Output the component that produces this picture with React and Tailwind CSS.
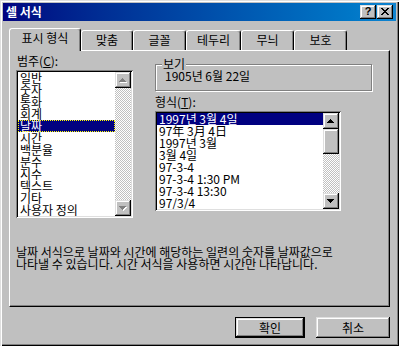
import React from "react";

const raised =
  "shadow-[inset_-1px_-1px_#000,inset_1px_1px_#dfdfdf,inset_-2px_-2px_#808080,inset_2px_2px_#fff]";
const sunken =
  "shadow-[inset_1px_1px_#808080,inset_-1px_-1px_#fff,inset_2px_2px_#000,inset_-2px_-2px_#dfdfdf]";
const track =
  "bg-[repeating-conic-gradient(#c0c0c0_0_25%,#ffffff_0_50%)] bg-[length:2px_2px]";

function Arrow({ dir, disabled }) {
  const rows = dir === "up" ? [[3, 0, 1], [2, 1, 3], [1, 2, 5], [0, 3, 7]] : [[0, 0, 7], [1, 1, 5], [2, 2, 3], [3, 3, 1]];
  return (
    <svg width="8" height="5" viewBox="0 0 8 5" shapeRendering="crispEdges">
      {disabled &&
        rows.map(([x, y, w], i) => <rect key={"s" + i} x={x + 1} y={y + 1} width={w} height={1} fill="#ffffff" />)}
      {rows.map(([x, y, w], i) => (
        <rect key={i} x={x} y={y} width={w} height={1} fill={disabled ? "#808080" : "#000000"} />
      ))}
    </svg>
  );
}

function ScrollBtn({ dir, disabled }) {
  return (
    <div className={`w-[16px] h-[16px] shrink-0 bg-[#c0c0c0] flex items-center justify-center ${raised}`}>
      <Arrow dir={dir} disabled={disabled} />
    </div>
  );
}

function Tab({ label, active, w }) {
  return (
    <div
      className={
        active
          ? "relative z-10 h-[23px] -mb-[1px] bg-[#c0c0c0] border-t border-l border-r border-t-white border-l-white border-r-black rounded-tl-[3px] rounded-tr-[3px] shadow-[inset_-1px_0_#808080] flex items-start justify-center pt-[2px]"
          : "h-[20px] bg-[#c0c0c0] border-t border-l border-r border-t-white border-l-white border-r-black rounded-tl-[3px] rounded-tr-[3px] shadow-[inset_-1px_0_#808080] flex items-start justify-center pt-[2px]"
      }
      style={{ width: w }}
    >
      <span className="leading-[14px]">{label}</span>
    </div>
  );
}

export default function App() {
  const categories = ["일반", "숫자", "통화", "회계", "날짜", "시간", "백분율", "분수", "지수", "텍스트", "기타", "사용자 정의"];
  const formats = [
    "1997년 3월 4일",
    "97年 3月 4日",
    "1997년 3월",
    "3월 4일",
    "97-3-4",
    "97-3-4 1:30 PM",
    "97-3-4 13:30",
    "97/3/4",
  ];
  const tabs = [
    ["표시 형식", 72, true],
    ["맞춤", 52],
    ["글꼴", 53],
    ["테두리", 55],
    ["무늬", 53],
    ["보호", 53],
  ];

  return (
    <div
      className={`w-[399px] h-[346px] bg-[#c0c0c0] p-[3px] flex flex-col text-[12px] text-black font-['Noto_Sans_CJK_KR','Noto_Sans',sans-serif] shadow-[inset_1px_1px_#dfdfdf,inset_2px_2px_#fff,inset_-1px_-1px_#000,inset_-2px_-2px_#808080]`}
    >
      {/* Title bar */}
      <div className="h-[18px] shrink-0 bg-linear-to-r from-[#000080] to-[#1084d0] flex items-center pl-[3px] pr-[3px]">
        <span className="text-white font-bold leading-[14px] flex-1">셀 서식</span>
        <div className="flex gap-[1px]">
          <div className={`w-[16px] h-[14px] bg-[#c0c0c0] flex items-center justify-center ${raised}`}>
            <span className="font-['Liberation_Sans',sans-serif] font-bold text-[11px] leading-[11px] mt-[-1px]">?</span>
          </div>
          <div className={`w-[16px] h-[14px] bg-[#c0c0c0] flex items-center justify-center ${raised}`}>
            <svg width="8" height="7" viewBox="0 0 8 7" shapeRendering="crispEdges" className="mt-[-1px]">
              {[0, 1, 2, 3, 4, 5, 6].map((i) => (
                <g key={i}>
                  <rect x={i} y={i} width={2} height={1} fill="#000" />
                  <rect x={6 - i} y={i} width={2} height={1} fill="#000" />
                </g>
              ))}
            </svg>
          </div>
        </div>
      </div>

      {/* Tabs */}
      <div className="mt-[7px] ml-[6px] h-[22px] flex items-end">
        {tabs.map(([l, w, a]) => (
          <Tab key={l} label={l} w={w} active={a} />
        ))}
      </div>

      {/* Panel */}
      <div className="ml-[6px] w-[381px] h-[257px] shrink-0 border border-t-white border-l-white border-r-black border-b-black shadow-[inset_-1px_-1px_#808080] flex flex-col pl-[6px] pt-[4px]">
        <div className="flex gap-[22px]">
          {/* Left column */}
          <div className="w-[117px] flex flex-col">
            <div className="leading-[12px] h-[12px] pl-[1px]">
              범주(<span className="underline">C</span>):
            </div>
            <div className={`mt-[3px] h-[148px] bg-white p-[2px] flex ${sunken}`}>
              <div className="flex-1 flex flex-col overflow-hidden">
                {categories.map((c, i) => (
                  <div
                    key={c}
                    className={
                      i === 4
                        ? "h-[12px] leading-[12px] pl-[2px] bg-[#000080] text-white outline-dotted outline-1 outline-[#ffff00] -outline-offset-1 whitespace-nowrap"
                        : "h-[12px] leading-[12px] pl-[2px] whitespace-nowrap"
                    }
                  >
                    {c}
                  </div>
                ))}
              </div>
              <div className={`w-[16px] flex flex-col ${track}`}>
                <ScrollBtn dir="up" disabled />
                <div className="flex-1" />
                <ScrollBtn dir="down" disabled />
              </div>
            </div>
          </div>

          {/* Right column */}
          <div className="w-[217px] flex flex-col">
            <fieldset className="mt-[3px] h-[33px] border border-[#808080] shadow-[inset_1px_1px_#fff,1px_1px_#fff] pl-[6px]">
              <legend className="px-[1px] leading-[12px] bg-[#c0c0c0]">보기</legend>
              <div className="ml-[3px] leading-[12px]">1905년 6월 22일</div>
            </fieldset>
            <div className="mt-[5px] leading-[12px] h-[12px]">
              형식(<span className="underline">T</span>):
            </div>
            <div className={`mt-[3px] w-[186px] h-[100px] bg-white p-[2px] flex ${sunken}`}>
              <div className="flex-1 flex flex-col overflow-hidden">
                {formats.map((f, i) => (
                  <div
                    key={f}
                    className={
                      i === 0
                        ? "h-[12px] leading-[12px] pl-[2px] bg-[#000080] text-white whitespace-nowrap"
                        : "h-[12px] leading-[12px] pl-[2px] whitespace-nowrap"
                    }
                  >
                    {f}
                  </div>
                ))}
              </div>
              <div className={`w-[16px] flex flex-col ${track}`}>
                <ScrollBtn dir="up" />
                <div className={`w-[16px] h-[25px] bg-[#c0c0c0] ${raised}`} />
                <div className="flex-1" />
                <ScrollBtn dir="down" />
              </div>
            </div>
          </div>
        </div>

        <div className="mt-[28px] leading-[12px]">
          <div>날짜 서식으로 날짜와 시간에 해당하는 일련의 숫자를 날짜값으로</div>
          <div>나타낼 수 있습니다. 시간 서식을 사용하면 시간만 나타납니다.</div>
        </div>
      </div>

      {/* Buttons */}
      <div className="mt-[10px] flex justify-end pr-[6px] gap-[11px]">
        <div className={`w-[70px] h-[21px] border border-black bg-[#c0c0c0] flex items-center justify-center ${raised}`}>
          <span className="leading-[12px]">확인</span>
        </div>
        <div className={`w-[74px] h-[21px] bg-[#c0c0c0] flex items-center justify-center ${raised}`}>
          <span className="leading-[12px]">취소</span>
        </div>
      </div>
    </div>
  );
}
